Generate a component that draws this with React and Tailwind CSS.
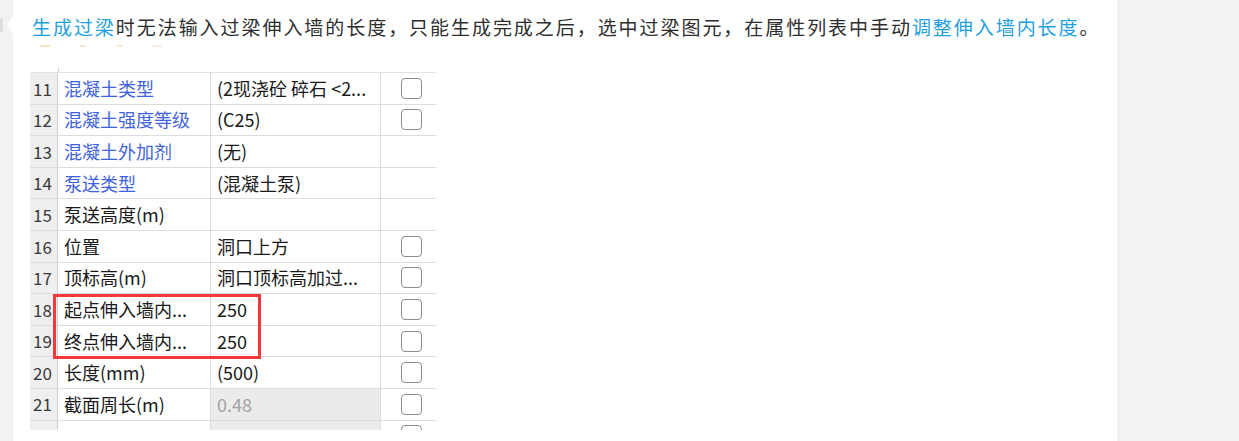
import React from 'react';

const rows = [
  { n: 11, name: '混凝土类型', link: true, value: '(2现浇砼 碎石 <2...', check: true },
  { n: 12, name: '混凝土强度等级', link: true, value: '(C25)', check: true },
  { n: 13, name: '混凝土外加剂', link: true, value: '(无)', check: false },
  { n: 14, name: '泵送类型', link: true, value: '(混凝土泵)', check: false },
  { n: 15, name: '泵送高度(m)', value: '', check: false },
  { n: 16, name: '位置', value: '洞口上方', check: true },
  { n: 17, name: '顶标高(m)', value: '洞口顶标高加过...', check: true },
  { n: 18, name: '起点伸入墙内...', value: '250', check: true },
  { n: 19, name: '终点伸入墙内...', value: '250', check: true },
  { n: 20, name: '长度(mm)', value: '(500)', check: true },
  { n: 21, name: '截面周长(m)', value: '0.48', check: true, muted: true },
];

const Checkbox = () => (
  <div className="w-[21px] h-[21px] rounded-[4px] border-[1.5px] border-[#8c8c8c] bg-white" />
);

const Row = ({ row }) => (
  <div className="flex h-[31.6px] border-b border-[#dcdcdc]">
    <div className="w-[28px] shrink-0 bg-[#efefef] border-r border-[#cfcfcf] flex items-center pl-[3px] text-[17px] text-[#3a3a3a]">
      {row.n}
    </div>
    <div
      className={`w-[153px] shrink-0 border-r border-[#dcdcdc] flex items-center pl-[6px] whitespace-nowrap ${
        row.link ? 'text-[#3f63e0]' : 'text-[#1a1a1a]'
      }`}
    >
      {row.name}
    </div>
    <div
      className={`w-[170px] shrink-0 border-r border-[#dcdcdc] flex items-center pl-[6px] whitespace-nowrap ${
        row.muted ? 'bg-[#ebebeb] text-[#a3a3a3]' : 'text-[#1a1a1a]'
      }`}
    >
      {row.value}
    </div>
    <div className="w-[55px] shrink-0 flex items-center justify-center pl-[6px]">
      {row.check && <Checkbox />}
    </div>
  </div>
);

export default function App() {
  return (
    <div
      className="w-[1239px] h-[441px] flex bg-white overflow-hidden"
      style={{ fontFamily: '"Noto Sans CJK SC", "Noto Sans", sans-serif' }}
    >
      {/* left rail */}
      <div className="w-[13px] shrink-0 bg-[#f2f2f2] relative">
        <div className="absolute left-0 top-[18px] w-[3px] h-[14px] bg-[#dedede]" />
        <div className="absolute right-0 top-[16px] w-0 h-0 border-y-[9px] border-y-transparent border-r-[6px] border-r-white" />
      </div>

      {/* main card */}
      <div className="flex-1 flex flex-col pl-[19px]">
        <p className="mt-[14px] text-[19px] leading-[26px] tracking-[1.95px] text-[#2e2e2e] whitespace-nowrap">
          <span className="text-[#1e9fe0]">生成过梁</span>
          时无法输入过梁伸入墙的长度，只能生成完成之后，选中过梁图元，在属性列表中手动
          <span className="text-[#1e9fe0]">调整伸入墙内长度</span>。
        </p>

        {/* faint artefacts of the cropped picture */}
        <div className="mt-[5px] h-[2px] w-[250px] flex gap-[30px] pl-[8px]">
          <div className="w-[10px] h-[2px] bg-[#fbe2c0]" />
          <div className="w-[6px] h-[2px] bg-[#fde9cf]" />
          <div className="w-[6px] h-[2px] bg-[#fde9cf]" />
          <div className="w-[10px] h-[2px] bg-[#fdeedb]" />
        </div>

        {/* property table screenshot */}
        <div className="relative mt-[25px] w-[406px] -ml-[2px] text-[18px]">
          <div className="h-[1px] bg-[#e2e2e2]" />
          <div className="absolute left-[28px] top-[-4px] w-px h-[4px] bg-[#cfcfcf]" />
          {rows.map((r) => (
            <Row key={r.n} row={r} />
          ))}
          <div className="flex h-[9px] overflow-hidden">
            <div className="w-[28px] shrink-0 bg-[#efefef] border-r border-[#cfcfcf]" />
            <div className="w-[153px] shrink-0 border-r border-[#dcdcdc]" />
            <div className="w-[170px] shrink-0 border-r border-[#dcdcdc] bg-[#ebebeb]" />
            <div className="w-[55px] shrink-0 flex justify-center pl-[6px] pt-[4px]">
              <Checkbox />
            </div>
          </div>

          {/* red highlight */}
          <div className="absolute left-[23px] top-[222px] w-[208px] h-[65px] border-[3px] border-[#f2383a]" />
        </div>
      </div>

      {/* right rail */}
      <div className="w-[122px] shrink-0 bg-[#f2f2f2]" />
    </div>
  );
}
